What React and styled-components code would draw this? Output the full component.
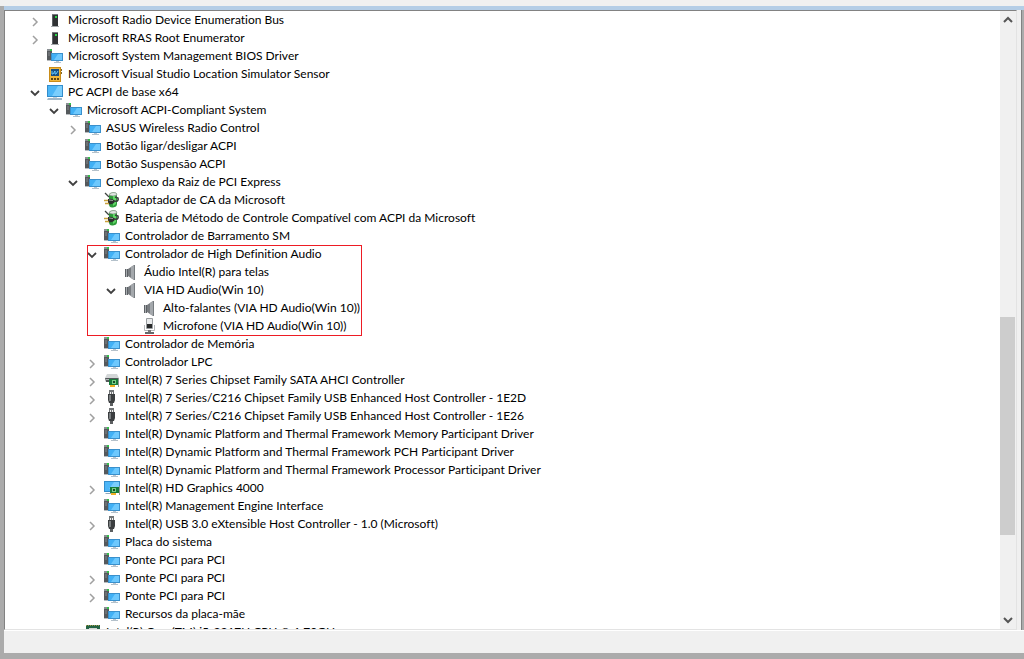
import React, { useState } from "react";
import styled, { createGlobalStyle } from "styled-components";

const GlobalStyle = createGlobalStyle`
  body {
    margin: 0;
    background: #ababab;
    color: #000;
    font-family: Lato, "Open Sans", sans-serif;
    font-size: 12px;
    font-variant-ligatures: none;
  }
`;

const Window = styled.div`
  display: flex;
  flex-direction: column;
  height: 100vh;
`;

const ToolbarEdge = styled.header`
  height: 6px;
  background: #f0f0f0;
`;

const Frame = styled.div`
  flex: 1;
  min-height: 0;
  display: flex;
  flex-direction: column;
  margin: 0 0 6px 4px;
  border-top: 4px solid #b4cde6;
  background: #f0f0f0;
`;

const Content = styled.div`
  flex: 1;
  min-height: 0;
  display: flex;
`;

const TreePane = styled.main`
  flex: 1;
  min-width: 0;
  display: flex;
  border: 1px solid #828282;
  border-right-color: #e3e3e3;
  border-bottom-color: #e3e3e3;
  background: #fff;
`;

const TreeView = styled.nav`
  flex: 1;
  min-width: 0;
  overflow: hidden;
  padding-left: 25px;
`;

const Branch = styled.ul`
  list-style: none;
  margin: 0;
  padding: 0 0 0 ${(props) => (props.$nested ? "19px" : "0")};
`;

const Item = styled.li`
  position: relative;
  width: fit-content;

  &::after {
    content: "";
    display: ${(props) => (props.$marked ? "block" : "none")};
    position: absolute;
    inset: 0 -2px -1px 0;
    border: 1px solid #ed1c24;
    pointer-events: none;
  }
`;

const Row = styled.div`
  display: flex;
  align-items: center;
  height: 18px;
  line-height: 18px;
  white-space: nowrap;
`;

const Expander = styled.button`
  display: flex;
  align-items: center;
  justify-content: center;
  width: 10px;
  height: 18px;
  margin-right: 7px;
  padding: ${(props) => (props.$open ? "2px" : "4px")} 0 0;
  border: none;
  background: none;
  color: ${(props) => (props.$open ? "#404040" : "#a0a0a0")};
`;

const Spacer = styled.span`
  width: 17px;
`;

const Icon = styled.svg`
  width: 16px;
  height: 16px;
  margin-right: 5px;
  flex-shrink: 0;
`;

const ScrollBar = styled.div`
  display: flex;
  flex-direction: column;
  width: 16px;
  background: #f0f0f0;
`;

const ScrollButton = styled.button`
  display: flex;
  align-items: center;
  justify-content: center;
  height: 18px;
  padding: 0;
  border: none;
  background: none;
  color: #555;
`;

const Track = styled.div`
  flex: ${(props) => props.$size};
`;

const Thumb = styled(Track)`
  background: #cdcdcd;
  margin-right: 1px;
`;

const SideEdge = styled.aside`
  width: 2px;
  margin-left: 4px;
  border-left: 1px solid #828282;
  background: #ababab;
`;

const StatusBar = styled.footer`
  height: 22px;
  border-top: 1px solid #fff;
  background: #f0f0f0;
`;

const icons = {
  device: (
    <>
      <path d="M0 2h5v10H0z" fill="#55595c" />
      <path d="M0 1h5v2H0z" fill="#8b9094" />
      <path d="M1 5h2M1 7h2" stroke="#85898c" />
      <rect x="3" y="1" width="2" height="2" fill="#35c04b" />
      <path d="M0 12h4v1H0z" fill="#b9bdc0" />
      <rect x="4" y="5" width="12" height="8" fill="#3a90cc" />
      <rect x="5" y="6" width="10" height="6" fill="#41b0f5" />
      <path d="M11 6h4v6H7z" fill="#6dc8fd" />
      <path d="M9 13h3v1H9z" fill="#b9c6cf" />
      <path d="M7 14h7v1H7z" fill="#b4c1cb" />
    </>
  ),
  tower: (
    <>
      <rect x="5" y="2" width="6" height="12" fill="#303234" />
      <path d="M5 2h1v12H5z" fill="#5d6164" />
      <path d="M5 2h6v1H5z" fill="#777b7e" />
      <rect x="8" y="4" width="2" height="2" fill="#29d548" />
      <path d="M4 14h8v1H4z" fill="#a4a8ab" />
    </>
  ),
  sensor: (
    <>
      <rect x="2" y="1" width="12" height="15" fill="#c98c18" />
      <rect x="3" y="2" width="10" height="13" fill="#f0b73d" />
      <rect x="4" y="3" width="8" height="7" fill="#174f82" />
      <path d="M5 5v3h1l2-3v3h1l2-3" fill="none" stroke="#67c8ff" />
      <path d="M4 12h2v2H4zM7 12h2v2H7zM10 12h2v2h-2z" fill="#604410" />
      <path d="M14 3h1v2h-1zM14 6h1v2h-1z" fill="#80692d" />
    </>
  ),
  computer: (
    <>
      <rect x="0" y="1" width="16" height="12" fill="#338dcb" />
      <rect x="1" y="2" width="14" height="10" fill="#4cb6f7" />
      <path d="M11 2h4v10H5z" fill="#7bcefd" />
      <path d="M6 13h4v1H6z" fill="#c6d2da" />
      <path d="M1 14h14v2H0z" fill="#a3b8c8" />
    </>
  ),
  power: (
    <>
      <path d="M5 3q0-2 4-2.5t4 2.5v9q0 3-4 3.5t-4-3.5z" fill="#2c9a38" />
      <path d="M5 3q0-2 4-2.5t4 2.5q-4 2-8 0z" fill="#dfe5e0" stroke="#7d8a80" strokeWidth="0.6" />
      <path d="M9 4h3v8l-3 2z" fill="#62d768" />
      <path d="M1 1l4 4" stroke="#3f4441" strokeWidth="1.2" />
      <path d="M4 7q3-1 6 1l1 1-1 2q-3 2-6 1z" fill="#2d302e" />
      <path d="M10 9q5 1 4-3l-3-1" fill="none" stroke="#3a3f3c" strokeWidth="1.6" />
      <path d="M0 8.5h4M1 11.5h4" stroke="#c9a13b" strokeWidth="1.5" />
      <path d="M5 8l4 0.5" stroke="#969e99" />
    </>
  ),
  speaker: (
    <>
      <path d="M2 5h3v8H2z" fill="#5d6165" />
      <path d="M3 5h1v8H3z" fill="#a9adb1" />
      <path d="M5 5l6-4v15l-6-4z" fill="#797d81" />
      <path d="M8 3l3-2v15l-3-2z" fill="#a4a8ac" />
      <path d="M11.5 1v15" stroke="#777c80" />
    </>
  ),
  microphone: (
    <>
      <rect x="4" y="0" width="7" height="11" rx="1" fill="#999da0" />
      <rect x="5" y="1" width="5" height="5" fill="#e9ebec" />
      <rect x="5" y="6" width="5" height="4" fill="#27292a" />
      <path d="M2.5 7v5.5h10V7" fill="none" stroke="#b5b8ba" />
      <path d="M6 12h3v2H6z" fill="#777" />
      <path d="M3 14h9v2H3z" fill="#66696b" />
    </>
  ),
  storage: (
    <>
      <path d="M3 2h10l2 4H1z" fill="#d3d6d7" />
      <path d="M1 6h14v4H2z" fill="#55595b" />
      <path d="M2 7h4v1H2z" fill="#aeb4b5" />
      <path d="M5 7h9v6H5z" fill="#187a3b" />
      <path d="M8 8h4v4H8z" fill="#78cf86" />
      <path d="M9 9h2v2H9z" fill="#174a2a" />
      <path d="M6 13h5v2H6z" fill="#efae22" />
      <path d="M14 6h1v9h-1z" fill="#8d9892" />
    </>
  ),
  usb: (
    <>
      <path d="M5 0h5v5H5z" fill="#717577" />
      <path d="M6 2h1v2H6zM8 2h1v2H8z" fill="#f2f2f2" />
      <path d="M4 4h7v6l-1 3H5l-1-3z" fill="#3b3e40" />
      <path d="M5 5h2v6H5z" fill="#7a7e80" />
      <path d="M6 13h3v3H6z" fill="#5c5f61" />
    </>
  ),
  display: (
    <>
      <rect x="0" y="1" width="16" height="11" fill="#338dcb" />
      <rect x="1" y="2" width="14" height="9" fill="#4cb6f7" />
      <path d="M10 2h5v7H5z" fill="#7bcefd" />
      <path d="M2 13h5v1H1z" fill="#8faabe" />
      <path d="M6 7h9v6H6z" fill="#187a3b" />
      <path d="M8 8h4v4H8z" fill="#78cf86" />
      <path d="M9 9h2v2H9z" fill="#174a2a" />
      <path d="M7 13h5v2H7z" fill="#efae22" />
      <path d="M15.5 6v9" stroke="#8d9892" />
    </>
  ),
  processor: (
    <>
      <rect x="1" y="1" width="14" height="14" fill="#236344" />
      <path d="M1 1.5h14" stroke="#a49a4b" strokeDasharray="1 1" />
      <rect x="4" y="4" width="8" height="8" fill="#d0d4d2" />
    </>
  ),
};

const rootDevices = [
  { name: "Microsoft Radio Device Enumeration Bus", icon: "tower", closed: true },
  { name: "Microsoft RRAS Root Enumerator", icon: "tower", closed: true },
  { name: "Microsoft System Management BIOS Driver" },
  { name: "Microsoft Visual Studio Location Simulator Sensor", icon: "sensor" },
  {
    name: "PC ACPI de base x64",
    icon: "computer",
    children: [
      {
        name: "Microsoft ACPI-Compliant System",
        children: [
          { name: "ASUS Wireless Radio Control", closed: true },
          { name: "Botão ligar/desligar ACPI" },
          { name: "Botão Suspensão ACPI" },
          {
            name: "Complexo da Raiz de PCI Express",
            children: [
              { name: "Adaptador de CA da Microsoft", icon: "power" },
              { name: "Bateria de Método de Controle Compatível com ACPI da Microsoft", icon: "power" },
              { name: "Controlador de Barramento SM" },
              {
                name: "Controlador de High Definition Audio",
                marked: true,
                children: [
                  { name: "Áudio Intel(R) para telas", icon: "speaker" },
                  {
                    name: "VIA HD Audio(Win 10)",
                    icon: "speaker",
                    children: [
                      { name: "Alto-falantes (VIA HD Audio(Win 10))", icon: "speaker" },
                      { name: "Microfone (VIA HD Audio(Win 10))", icon: "microphone" },
                    ],
                  },
                ],
              },
              { name: "Controlador de Memória" },
              { name: "Controlador LPC", closed: true },
              { name: "Intel(R) 7 Series Chipset Family SATA AHCI Controller", icon: "storage", closed: true },
              { name: "Intel(R) 7 Series/C216 Chipset Family USB Enhanced Host Controller - 1E2D", icon: "usb", closed: true },
              { name: "Intel(R) 7 Series/C216 Chipset Family USB Enhanced Host Controller - 1E26", icon: "usb", closed: true },
              { name: "Intel(R) Dynamic Platform and Thermal Framework Memory Participant Driver" },
              { name: "Intel(R) Dynamic Platform and Thermal Framework PCH Participant Driver" },
              { name: "Intel(R) Dynamic Platform and Thermal Framework Processor Participant Driver" },
              { name: "Intel(R) HD Graphics 4000", icon: "display", closed: true },
              { name: "Intel(R) Management Engine Interface" },
              { name: "Intel(R) USB 3.0 eXtensible Host Controller - 1.0 (Microsoft)", icon: "usb", closed: true },
              { name: "Placa do sistema" },
              { name: "Ponte PCI para PCI" },
              { name: "Ponte PCI para PCI", closed: true },
              { name: "Ponte PCI para PCI", closed: true },
              { name: "Recursos da placa-mãe" },
            ],
          },
          { name: "Intel(R) Core(TM) i5-3317U CPU @ 1.70GHz", icon: "processor" },
        ],
      },
    ],
  },
];

const chevrons = {
  right: "M3 1l4 4-4 4",
  down: "M1 3l4 4 4-4",
  up: "M1 7l4-4 4 4",
};

const Chevron = ({ direction, weight }) => (
  <svg width="10" height="10" viewBox="0 0 10 10" aria-hidden="true">
    <path d={chevrons[direction]} fill="none" stroke="currentColor" strokeWidth={weight} />
  </svg>
);

function Device({ device }) {
  const [open, setOpen] = useState(!device.closed);
  const expandable = device.closed || device.children;

  return (
    <Item $marked={device.marked}>
      <Row>
        {expandable ? (
          <Expander $open={open} aria-label={device.name} aria-expanded={open} onClick={() => setOpen(!open)}>
            <Chevron direction={open ? "down" : "right"} weight={open ? 1.8 : 1.5} />
          </Expander>
        ) : (
          <Spacer />
        )}
        <Icon viewBox="0 0 16 16" aria-hidden="true">{icons[device.icon || "device"]}</Icon>
        <span>{device.name}</span>
      </Row>
      {open && device.children && (
        <Branch $nested>
          {device.children.map((child, index) => (
            <Device key={index} device={child} />
          ))}
        </Branch>
      )}
    </Item>
  );
}

function App() {
  return (
    <Window>
      <GlobalStyle />
      <ToolbarEdge />
      <Frame>
        <Content>
          <TreePane>
            <TreeView>
              <Branch>
                {rootDevices.map((device, index) => (
                  <Device key={index} device={device} />
                ))}
              </Branch>
            </TreeView>
            <ScrollBar>
              <ScrollButton aria-label="Scroll up">
                <Chevron direction="up" weight={2} />
              </ScrollButton>
              <Track $size={287} />
              <Thumb $size={218} />
              <Track $size={76} />
              <ScrollButton aria-label="Scroll down">
                <Chevron direction="down" weight={2} />
              </ScrollButton>
            </ScrollBar>
          </TreePane>
          <SideEdge />
        </Content>
        <StatusBar />
      </Frame>
    </Window>
  );
}

export default App;
